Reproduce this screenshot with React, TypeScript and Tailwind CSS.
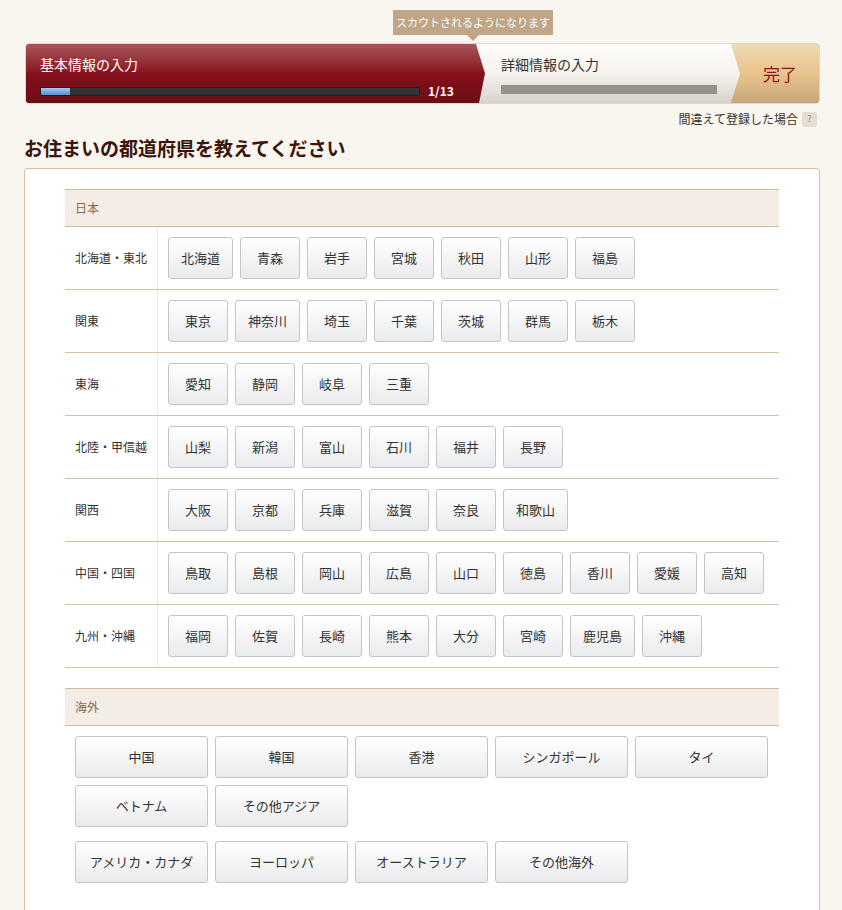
import React from 'react';

const font = '"Noto Sans CJK JP", "Noto Sans", sans-serif';

const regions: { name: string; prefs: string[] }[] = [
  { name: '北海道・東北', prefs: ['北海道', '青森', '岩手', '宮城', '秋田', '山形', '福島'] },
  { name: '関東', prefs: ['東京', '神奈川', '埼玉', '千葉', '茨城', '群馬', '栃木'] },
  { name: '東海', prefs: ['愛知', '静岡', '岐阜', '三重'] },
  { name: '北陸・甲信越', prefs: ['山梨', '新潟', '富山', '石川', '福井', '長野'] },
  { name: '関西', prefs: ['大阪', '京都', '兵庫', '滋賀', '奈良', '和歌山'] },
  { name: '中国・四国', prefs: ['鳥取', '島根', '岡山', '広島', '山口', '徳島', '香川', '愛媛', '高知'] },
  { name: '九州・沖縄', prefs: ['福岡', '佐賀', '長崎', '熊本', '大分', '宮崎', '鹿児島', '沖縄'] },
];

const asia = ['中国', '韓国', '香港', 'シンガポール', 'タイ', 'ベトナム', 'その他アジア'];
const others = ['アメリカ・カナダ', 'ヨーロッパ', 'オーストラリア', 'その他海外'];

const btn =
  'h-[42px] rounded-[3px] border border-[#c4c4c4] bg-gradient-to-b from-white to-[#eaebed] text-[13px] text-[#333] flex items-center justify-center';

const ProgressBar: React.FC = () => (
  <div className="relative ml-px flex h-[61px] overflow-hidden rounded-[4px] border border-[#dcd6cc] bg-gradient-to-b from-[#fdfcfa] via-[#f6f3ee] to-[#d6d2cb]">
    <div className="relative z-10 flex w-[459px] shrink-0 flex-col bg-gradient-to-b from-[#a7545c] via-[#860f1c] to-[#6a0e16] pl-[14px] pr-[20px] [clip-path:polygon(0_0,calc(100%-9px)_0,100%_50%,calc(100%-6px)_100%,0_100%)]">
      <div className="mt-[10px] text-[14px] leading-[20px] text-white">基本情報の入力</div>
      <div className="mt-[10px] flex items-center">
        <div className="h-[9px] w-[380px] border border-[#1e1e1e] bg-[#333]">
          <div className="h-full w-[29px] bg-gradient-to-b from-[#a9cdf0] to-[#4f8fd0]" />
        </div>
        <span className="ml-[8px] text-[12px] font-bold leading-[14px] text-white">1/13</span>
      </div>
    </div>
    <div className="flex w-[246px] shrink-0 flex-col pl-[16px]">
      <div className="mt-[10px] text-[14px] leading-[20px] text-[#333]">詳細情報の入力</div>
      <div className="mt-[11px] h-[9px] w-[216px] bg-[#94928b]" />
    </div>
    <div className="flex flex-1 items-center justify-center bg-gradient-to-b from-[#f0d8b2] via-[#e9c48d] to-[#c7a678] pl-[10px] text-[17px] text-[#8d1616] [clip-path:polygon(0_0,100%_0,100%_100%,0_100%,9px_50%)]">
      完了
    </div>
  </div>
);

const App: React.FC = () => {
  return (
    <div className="min-h-[910px] bg-[#f9f6f0] pl-[24px] pr-[22px]" style={{ fontFamily: font }}>
      <div className="pt-[10px]">
        <div className="relative ml-[369px] flex h-[25px] w-[160px] items-center justify-center bg-[#bea687] text-[11px] text-white">
          スカウトされるようになります
          <div className="absolute left-[74px] top-[25px] h-0 w-0 border-x-[6px] border-t-[6px] border-x-transparent border-t-[#bea687]" />
        </div>
      </div>
      <div className="mt-[8px]">
        <ProgressBar />
      </div>
      <div className="mt-[6px] flex items-center justify-end pr-[3px] text-[12px] text-[#333]">
        <span>間違えて登録した場合</span>
        <span className="ml-[4px] flex h-[15px] w-[15px] items-center justify-center rounded-[2px] bg-[#e6ddd1] text-[9px] text-[#8a8a8a]">?</span>
      </div>
      <h1 className="mt-[7px] text-[19px] font-bold leading-[26px] text-[#3d1408]">お住まいの都道府県を教えてください</h1>
      <div className="mt-[7px] rounded-[3px] border border-[#d6bfa3] bg-white px-[40px] pb-[60px] pt-[20px]">
        <div className="flex h-[38px] items-center border-y border-[#d2b9a0] bg-[#f4ede6] pl-[10px] text-[12px] text-[#86684c]">日本</div>
        {regions.map((r) => (
          <div key={r.name} className="flex h-[63px] border-b border-[#d6c0a8]">
            <div className="flex w-[93px] shrink-0 items-center border-r border-[#f1e8de] pl-[10px] text-[12px] text-[#333]">{r.name}</div>
            <div className="flex items-center gap-[7px] pl-[10px]">
              {r.prefs.map((p) => (
                <div key={p} className={`${btn} min-w-[60px] px-[12px]`}>{p}</div>
              ))}
            </div>
          </div>
        ))}
        <div className="mt-[20px] flex h-[38px] items-center border-y border-[#d2b9a0] bg-[#f4ede6] pl-[10px] text-[12px] text-[#86684c]">海外</div>
        <div className="px-[10px] pt-[10px]">
          <div className="grid grid-cols-[repeat(5,133px)] gap-[7px]">
            {asia.map((c) => (
              <div key={c} className={btn}>{c}</div>
            ))}
          </div>
          <div className="mt-[14px] grid grid-cols-[repeat(5,133px)] gap-[7px]">
            {others.map((c) => (
              <div key={c} className={btn}>{c}</div>
            ))}
          </div>
        </div>
      </div>
    </div>
  );
};

export default App;
